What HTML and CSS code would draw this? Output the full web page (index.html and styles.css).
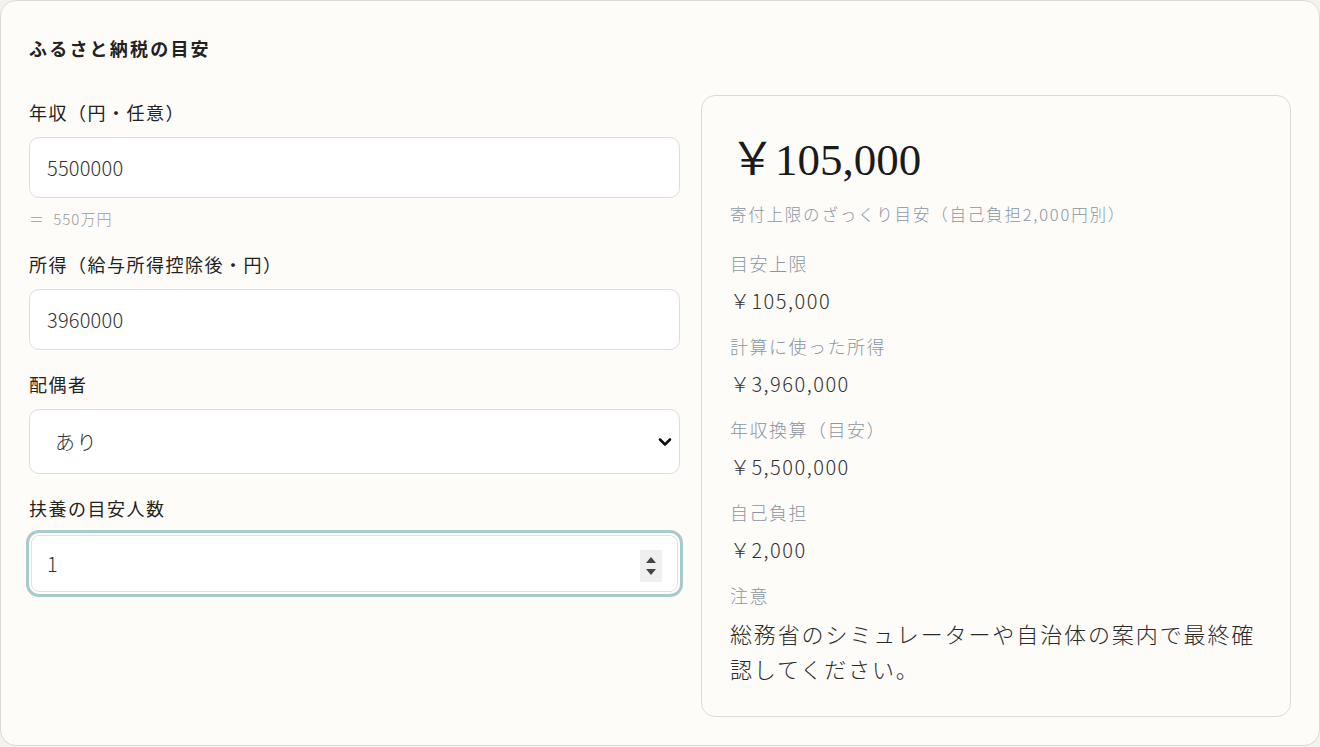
FILE: index.html
```html
<!DOCTYPE html>
<html lang="ja">
<head>
<meta charset="utf-8">
<title>ふるさと納税の目安</title>
<link rel="stylesheet" href="styles.css">
</head>
<body>
<section class="card">
  <h2 class="title">ふるさと納税の目安</h2>
  <div class="grid">
    <div class="form">
      <div class="field">
        <label class="label" for="income">年収（円・任意）</label>
        <input class="control" id="income" type="text" value="5500000">
        <div class="hint">＝ 550万円</div>
      </div>
      <div class="field">
        <label class="label" for="shotoku">所得（給与所得控除後・円）</label>
        <input class="control" id="shotoku" type="text" value="3960000">
      </div>
      <div class="field">
        <label class="label" for="spouse">配偶者</label>
        <div class="select-wrap">
          <select class="control select" id="spouse">
            <option>あり</option>
            <option>なし</option>
          </select>
          <svg class="chevron" width="14" height="10" viewBox="0 0 14 10"><path d="M2 2.5 L7 7.5 L12 2.5" fill="none" stroke="#111" stroke-width="2.6" stroke-linecap="round" stroke-linejoin="round"/></svg>
        </div>
      </div>
      <div class="field">
        <label class="label" for="deps">扶養の目安人数</label>
        <div class="number-wrap">
          <input class="control number focused" id="deps" type="number" value="1">
          <span class="spin"><span class="up"></span><span class="down"></span></span>
        </div>
      </div>
    </div>
    <div class="panel">
      <div class="amount">￥105,000</div>
      <div class="sub">寄付上限のざっくり目安（自己負担2,000円別）</div>
      <dl class="list">
        <dt>目安上限</dt>
        <dd>￥105,000</dd>
        <dt>計算に使った所得</dt>
        <dd>￥3,960,000</dd>
        <dt>年収換算（目安）</dt>
        <dd>￥5,500,000</dd>
        <dt>自己負担</dt>
        <dd>￥2,000</dd>
        <dt>注意</dt>
        <dd class="note">総務省のシミュレーターや自治体の案内で最終確認してください。</dd>
      </dl>
    </div>
  </div>
</section>
</body>
</html>
```
FILE: styles.css
```css
* { box-sizing: border-box; }
html, body { margin: 0; padding: 0; background: #f3f2ee; }
body {
  font-family: "Noto Sans CJK JP", "Noto Sans", sans-serif;
  color: #222;
}
.card {
  background: #fdfcf9;
  border: 1px solid #dedbd5;
  border-radius: 16px;
  padding: 35px 28px 28px 28px;
  height: 746px;
}
.title {
  margin: 0 0 35px 0;
  font-size: 18px;
  line-height: 24px;
  letter-spacing: 2.2px;
  font-weight: 700;
  color: #222;
}
.grid {
  display: grid;
  grid-template-columns: 1.103fr 1fr;
  gap: 21px;
  align-items: start;
}
.form {
  display: flex;
  flex-direction: column;
  gap: 17px;
}
.field { display: flex; flex-direction: column; }
.label {
  font-size: 18px;
  line-height: 34px;
  letter-spacing: 1.5px;
  margin-bottom: 8px;
  color: #222;
}
.control {
  display: block;
  width: 100%;
  height: 61px;
  border: 1px solid #e0dedb;
  border-radius: 10px;
  background: #fff;
  padding: 0 17px;
  font-family: "Noto Sans CJK JP", "Noto Sans", sans-serif;
  font-size: 20px;
  letter-spacing: 0.2px;
  font-weight: 300;
  color: #333;
  outline: none;
}
.hint {
  margin-top: 10px;
  font-size: 15px;
  line-height: 22px;
  letter-spacing: 1px;
  word-spacing: 4px;
  color: #9a9a9a;
  font-weight: 300;
}
.select-wrap { position: relative; }
.select {
  appearance: none;
  -webkit-appearance: none;
  height: 65px;
  padding-left: 25px;
  font-size: 20px;
  letter-spacing: 1.5px;
}
.chevron {
  position: absolute;
  right: 8px;
  top: 28px;
}
.number-wrap { position: relative; }
.number {
  -moz-appearance: textfield;
  height: 61px;
}
.number::-webkit-inner-spin-button,
.number::-webkit-outer-spin-button { -webkit-appearance: none; margin: 0; }
.focused {
  border: 2px solid #fff;
  box-shadow: 0 0 0 1px #eadcdc inset, 0 0 0 3px #a9caca;
  padding-left: 16px;
}
.spin {
  position: absolute;
  right: 18px;
  top: 17px;
  width: 22px;
  height: 32px;
  background: #efefef;
  display: flex;
  flex-direction: column;
  align-items: center;
  justify-content: center;
  gap: 6px;
}
.spin .up, .spin .down {
  width: 0; height: 0;
  border-left: 5px solid transparent;
  border-right: 5px solid transparent;
}
.spin .up { border-bottom: 6px solid #444; }
.spin .down { border-top: 6px solid #444; }
.panel {
  margin-top: 0;
  background: #fdfcf9;
  border: 1px solid #dedbd5;
  border-radius: 14px;
  padding: 28px 28px 30px 28px;
}
.amount {
  font-family: "Liberation Serif", "Noto Sans CJK JP", serif;
  font-size: 45px;
  line-height: 72px;
  color: #1a1a1a;
}
.sub {
  margin-top: 6px;
  font-size: 16.5px;
  line-height: 24px;
  letter-spacing: 1.8px;
  color: #8b95a3;
  font-weight: 300;
}
.list { margin: 24px 0 0 0; }
.list dt {
  font-size: 18px;
  line-height: 26px;
  letter-spacing: 1.5px;
  color: #8b95a3;
  font-weight: 300;
}
.list dd {
  margin: 10px 0 17px 0;
  font-size: 20px;
  line-height: 30px;
  letter-spacing: 1.5px;
  color: #333;
  font-weight: 300;
}
.list dd.note {
  margin: 8px 0 0 0;
  font-size: 22px;
  line-height: 35px;
  letter-spacing: 1.9px;
  color: #2a2a2a;
}
```
